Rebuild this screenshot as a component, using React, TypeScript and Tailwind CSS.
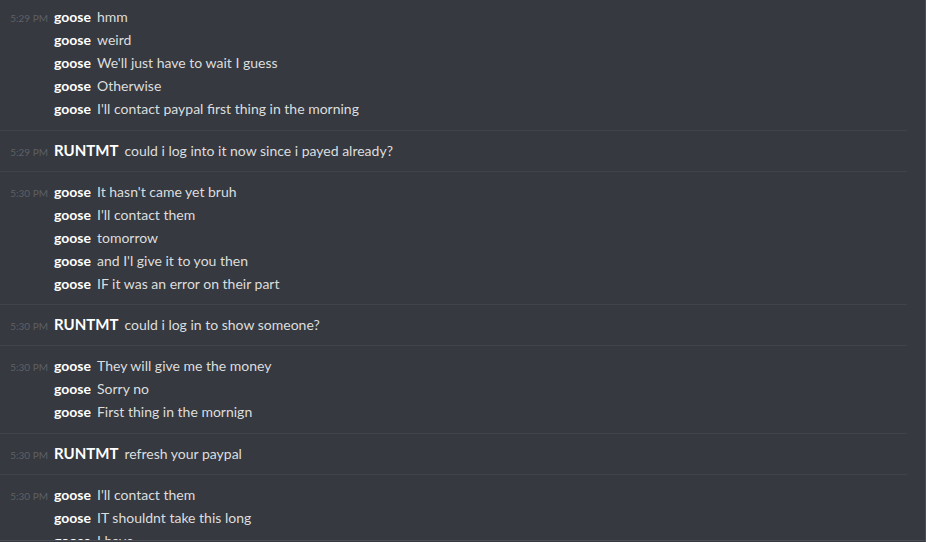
const groups = [
  {
    time: "5:29 PM",
    user: "goose",
    lines: ["hmm", "weird", "We'll just have to wait I guess", "Otherwise", "I'll contact paypal first thing in the morning"],
    pad: "pt-[5px] pb-[10px]",
  },
  { time: "5:29 PM", user: "RUNTMT", lines: ["could i log into it now since i payed already?"], pad: "pt-[8px] pb-[9px]" },
  {
    time: "5:30 PM",
    user: "goose",
    lines: ["It hasn't came yet bruh", "I'll contact them", "tomorrow", "and I'l give it to you then", "IF it was an error on their part"],
    pad: "pt-[8px] pb-[9px]",
  },
  { time: "5:30 PM", user: "RUNTMT", lines: ["could i log in to show someone?"], pad: "pt-[8px] pb-[9px]" },
  {
    time: "5:30 PM",
    user: "goose",
    lines: ["They will give me the money", "Sorry no", "First thing in the mornign"],
    pad: "pt-[8px] pb-[10px]",
  },
  { time: "5:30 PM", user: "RUNTMT", lines: ["refresh your paypal"], pad: "pt-[8px] pb-[9px]" },
  { time: "5:30 PM", user: "goose", lines: ["I'll contact them", "IT shouldnt take this long", "I have"], pad: "pt-[8px] pb-[8px]" },
];

export default function App() {
  return (
    <div className="w-[926px] h-[542px] bg-[#36393f] overflow-hidden flex flex-col border-r border-[#4a4d54] font-['Lato',sans-serif]">
      <div className="h-[540px] overflow-hidden flex">
        <div className="w-[907px]">
          {groups.map((g, gi) => (
            <div key={gi} className={`${g.pad} border-b border-[#40434a]`}>
              {g.lines.map((line, li) => (
                <div key={li} className="flex items-baseline h-[23px] leading-[23px]">
                  <span className="w-[54px] shrink-0 pr-[6px] text-right text-[10px] text-[#5d6066]">
                    {li === 0 ? g.time : ""}
                  </span>
                  <span
                    className={
                      g.user === "RUNTMT"
                        ? "text-white font-bold text-[15px] mr-[6px]"
                        : "text-white font-bold text-[14px] mr-[6px]"
                    }
                  >
                    {g.user}
                  </span>
                  <span className="text-[#dcddde] text-[14px]">{line}</span>
                </div>
              ))}
            </div>
          ))}
        </div>
        <div className="flex-1" />
      </div>
      <div className="h-px bg-[#4a4d54]" />
    </div>
  );
}
